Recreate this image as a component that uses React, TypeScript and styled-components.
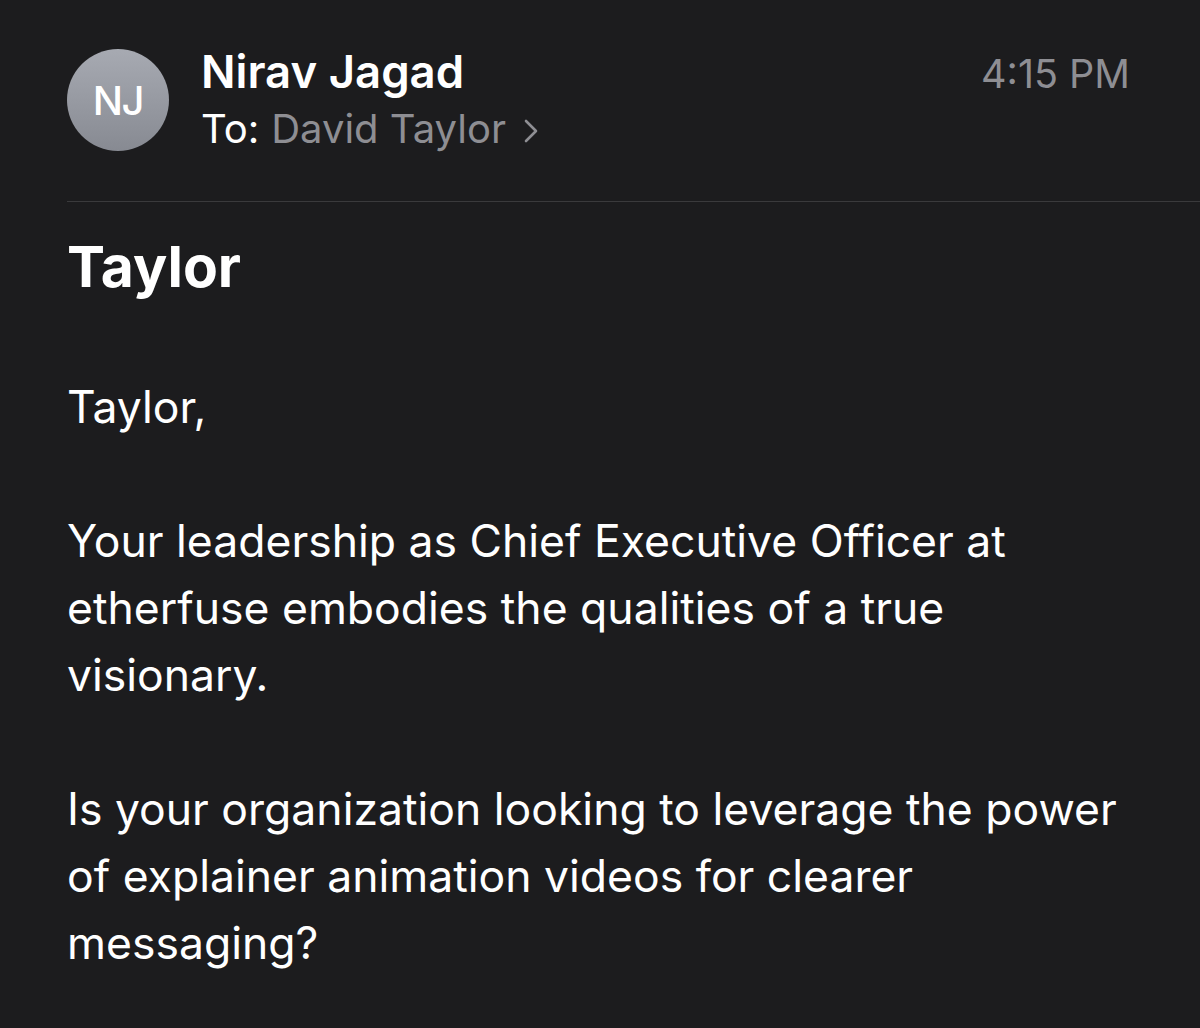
import React from "react";
import styled, { createGlobalStyle } from "styled-components";

const GlobalStyle = createGlobalStyle`
    html, body {
        margin: 0;
        padding: 0;
        background: #1c1c1e;
    }
    body {
        font-family: Inter, "Noto Sans", "Liberation Sans", sans-serif;
        -webkit-font-smoothing: antialiased;
    }
`;

const Page = styled.div`
    width: 1200px;
    height: 1028px;
    overflow: hidden;
    background: #1c1c1e;
    box-sizing: border-box;
    padding: 49px 0 0 67px;
`;

const Header = styled.header`
    display: flex;
    align-items: flex-start;
    padding-right: 70px;
    padding-bottom: 48px;
    border-bottom: 1px solid #3a3a3c;
`;

const Avatar = styled.div`
    width: 102px;
    height: 102px;
    border-radius: 50%;
    background: linear-gradient(180deg, #a7aab2 0%, #878a92 100%);
    color: #ffffff;
    display: flex;
    align-items: center;
    justify-content: center;
    font-size: 40px;
    font-weight: 500;
    letter-spacing: -1.5px;
    flex-shrink: 0;
`;

const Meta = styled.div`
    flex: 1;
    display: flex;
    flex-direction: column;
    margin-left: 32px;
`;

const Sender = styled.div`
    color: #ffffff;
    font-size: 45.5px;
    font-weight: 600;
    line-height: 50px;
    margin-top: -2px;
`;

const Recipient = styled.div`
    color: #ffffff;
    font-size: 40px;
    line-height: 48px;
    margin-top: 8px;
    display: flex;
    align-items: center;
`;

const RecipientName = styled.span`
    color: #8e8e93;
    margin-left: 12px;
`;

const Chevron = styled.svg`
    margin-left: 18px;
    margin-top: 4px;
`;

const Time = styled.div`
    color: #8e8e93;
    font-size: 39.5px;
    line-height: 50px;
`;

const Body = styled.main`
    padding-top: 35px;
    padding-right: 67px;
    color: #ffffff;
`;

const Subject = styled.h1`
    margin: 0;
    font-size: 57px;
    font-weight: 700;
    line-height: 60px;
`;

const Paragraph = styled.p<{ $gap: number }>`
    margin: 0;
    margin-top: ${(p) => p.$gap}px;
    font-size: 44.5px;
    line-height: 67px;
    font-weight: 400;
`;

const App = () => {
    return (
        <>
            <GlobalStyle />
            <Page>
                <Header>
                    <Avatar>NJ</Avatar>
                    <Meta>
                        <Sender>Nirav Jagad</Sender>
                        <Recipient>
                            To:
                            <RecipientName>David Taylor</RecipientName>
                            <Chevron width="14" height="24" viewBox="0 0 14 24">
                                <path d="M2 2 L12 12 L2 22" fill="none" stroke="#8e8e93" strokeWidth="2.6" strokeLinecap="round" strokeLinejoin="round" />
                            </Chevron>
                        </Recipient>
                    </Meta>
                    <Time>4:15 PM</Time>
                </Header>
                <Body>
                    <Subject>Taylor</Subject>
                    <Paragraph $gap={77}>Taylor,</Paragraph>
                    <Paragraph $gap={67}>
                        Your leadership as Chief Executive Officer at etherfuse embodies the qualities of a true visionary.
                    </Paragraph>
                    <Paragraph $gap={67}>
                        Is your organization looking to leverage the power of explainer animation videos for clearer messaging?
                    </Paragraph>
                </Body>
            </Page>
        </>
    );
};

export default App;
